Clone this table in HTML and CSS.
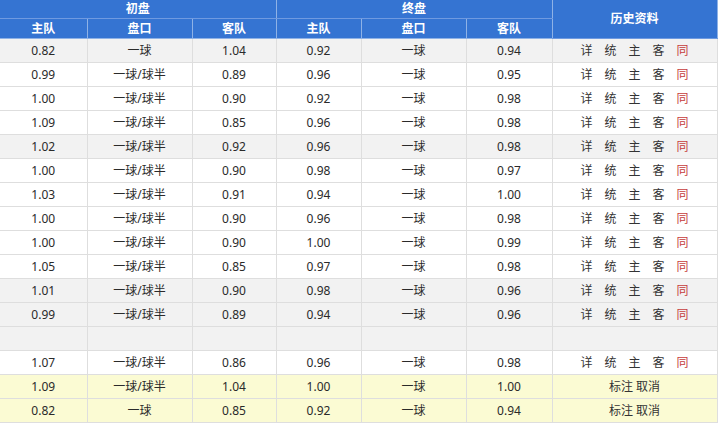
FILE: index.html
```html
<!DOCTYPE html>
<html lang="zh">
<head>
<meta charset="utf-8">
<title>让球</title>
<link rel="stylesheet" href="styles.css">
</head>
<body>
<table class="odds">
  <colgroup>
    <col class="c1"><col class="c2"><col class="c3"><col class="c4"><col class="c5"><col class="c6"><col class="c7">
  </colgroup>
  <thead>
    <tr class="h1">
      <th colspan="3">初盘</th>
      <th colspan="3">终盘</th>
      <th rowspan="2" class="hist">历史资料</th>
    </tr>
    <tr class="h2">
      <th>主队</th><th>盘口</th><th>客队</th>
      <th>主队</th><th>盘口</th><th>客队</th>
    </tr>
  </thead>
  <tbody>
    <tr class="gray"><td>0.82</td><td>一球</td><td>1.04</td><td>0.92</td><td>一球</td><td>0.94</td><td class="links"><span>详</span><span>统</span><span>主</span><span>客</span><span class="red">同</span></td></tr>
    <tr><td>0.99</td><td>一球/球半</td><td>0.89</td><td>0.96</td><td>一球</td><td>0.95</td><td class="links"><span>详</span><span>统</span><span>主</span><span>客</span><span class="red">同</span></td></tr>
    <tr><td>1.00</td><td>一球/球半</td><td>0.90</td><td>0.92</td><td>一球</td><td>0.98</td><td class="links"><span>详</span><span>统</span><span>主</span><span>客</span><span class="red">同</span></td></tr>
    <tr><td>1.09</td><td>一球/球半</td><td>0.85</td><td>0.96</td><td>一球</td><td>0.98</td><td class="links"><span>详</span><span>统</span><span>主</span><span>客</span><span class="red">同</span></td></tr>
    <tr class="gray"><td>1.02</td><td>一球/球半</td><td>0.92</td><td>0.96</td><td>一球</td><td>0.98</td><td class="links"><span>详</span><span>统</span><span>主</span><span>客</span><span class="red">同</span></td></tr>
    <tr><td>1.00</td><td>一球/球半</td><td>0.90</td><td>0.98</td><td>一球</td><td>0.97</td><td class="links"><span>详</span><span>统</span><span>主</span><span>客</span><span class="red">同</span></td></tr>
    <tr><td>1.03</td><td>一球/球半</td><td>0.91</td><td>0.94</td><td>一球</td><td>1.00</td><td class="links"><span>详</span><span>统</span><span>主</span><span>客</span><span class="red">同</span></td></tr>
    <tr><td>1.00</td><td>一球/球半</td><td>0.90</td><td>0.96</td><td>一球</td><td>0.98</td><td class="links"><span>详</span><span>统</span><span>主</span><span>客</span><span class="red">同</span></td></tr>
    <tr><td>1.00</td><td>一球/球半</td><td>0.90</td><td>1.00</td><td>一球</td><td>0.99</td><td class="links"><span>详</span><span>统</span><span>主</span><span>客</span><span class="red">同</span></td></tr>
    <tr><td>1.05</td><td>一球/球半</td><td>0.85</td><td>0.97</td><td>一球</td><td>0.98</td><td class="links"><span>详</span><span>统</span><span>主</span><span>客</span><span class="red">同</span></td></tr>
    <tr class="gray"><td>1.01</td><td>一球/球半</td><td>0.90</td><td>0.98</td><td>一球</td><td>0.96</td><td class="links"><span>详</span><span>统</span><span>主</span><span>客</span><span class="red">同</span></td></tr>
    <tr class="gray"><td>0.99</td><td>一球/球半</td><td>0.89</td><td>0.94</td><td>一球</td><td>0.96</td><td class="links"><span>详</span><span>统</span><span>主</span><span>客</span><span class="red">同</span></td></tr>
    <tr class="gray"><td></td><td></td><td></td><td></td><td></td><td></td><td></td></tr>
    <tr><td>1.07</td><td>一球/球半</td><td>0.86</td><td>0.96</td><td>一球</td><td>0.98</td><td class="links"><span>详</span><span>统</span><span>主</span><span>客</span><span class="red">同</span></td></tr>
    <tr class="yellow"><td>1.09</td><td>一球/球半</td><td>1.04</td><td>1.00</td><td>一球</td><td>1.00</td><td class="marks">标注 取消</td></tr>
    <tr class="yellow"><td>0.82</td><td>一球</td><td>0.85</td><td>0.92</td><td>一球</td><td>0.94</td><td class="marks">标注 取消</td></tr>
  </tbody>
</table>
</body>
</html>
```
FILE: styles.css
```css
html, body {
  margin: 0;
  padding: 0;
  background: #ffffff;
}
body {
  font-family: "Noto Sans", "Noto Sans CJK SC", sans-serif;
  font-size: 12px;
  color: #2a2a2a;
}
.odds {
  border-collapse: collapse;
  table-layout: fixed;
  width: 717px;
}
.c1 { width: 87px; }
.c2 { width: 105px; }
.c3 { width: 84px; }
.c4 { width: 85px; }
.c5 { width: 105px; }
.c6 { width: 86px; }
.c7 { width: 165px; }

.odds th {
  background: #3574d2;
  color: #ffffff;
  font-weight: bold;
  padding: 0;
  line-height: 16px;
  border: 1px solid #8fb2e6;
  border-top: none;
}
.odds .h1 th { height: 18px; }
.odds .h2 th { height: 19px; }
.odds th:first-child { border-left: none; }
.odds .h1 th { border-bottom-color: #6f9ae0; }

.odds td {
  height: 23px;
  padding: 0;
  text-align: center;
  border: 1px solid #dedede;
  line-height: 16px;
  white-space: nowrap;
}
.odds td:first-child { border-left: none; }
.odds .gray td { background: #f2f2f2; }
.odds .yellow td { background: #fbfbd3; }

.links span {
  margin: 0 6px;
  color: #333333;
}
.links .red { color: #c63c3c; }
.marks { color: #333333; }
```
